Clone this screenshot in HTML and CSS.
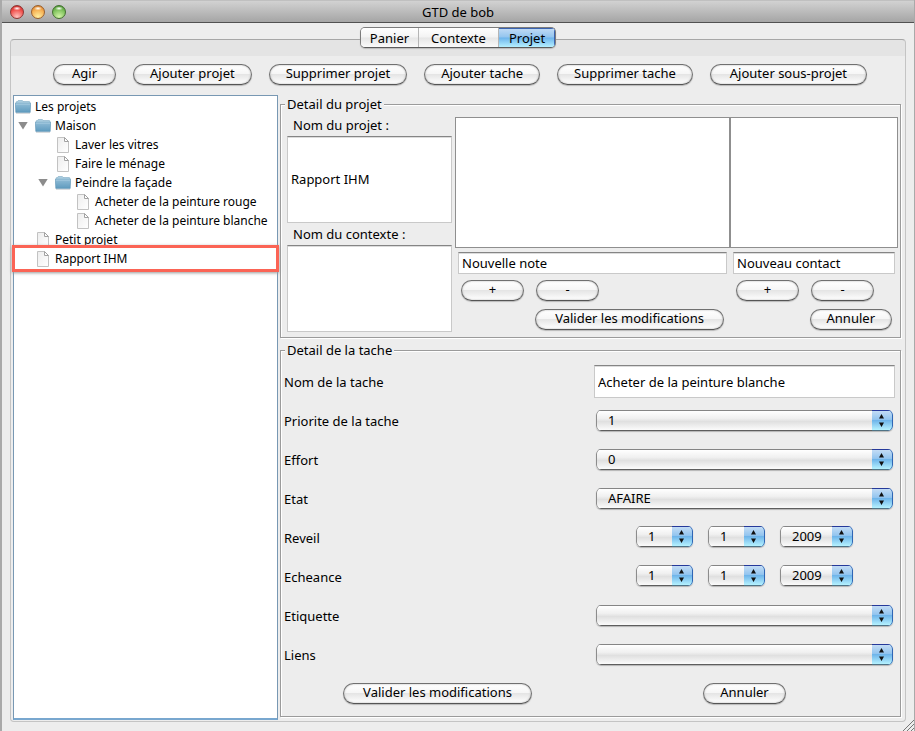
FILE: index.html
```html
<!DOCTYPE html>
<html lang="fr">
<head>
<meta charset="utf-8">
<title>GTD de bob</title>
<link rel="stylesheet" href="styles.css">
</head>
<body>
<svg class="defs" width="0" height="0" aria-hidden="true">
  <defs>
    <linearGradient id="folder-front" x1="0" y1="0" x2="0" y2="1">
      <stop offset="0" stop-color="#90bcd6"/><stop offset="1" stop-color="#5f9bbf"/>
    </linearGradient>
    <linearGradient id="page-fill" x1="0" y1="0" x2="1" y2="1">
      <stop offset="0" stop-color="#ededed"/><stop offset="1" stop-color="#ffffff"/>
    </linearGradient>
    <symbol id="folder" viewBox="0 0 16 16">
      <path d="M1 5V3.4Q1 2.5 2 2.5H2.6L3.2 1.5H7.4L8 2.5H14Q15 2.5 15 3.4V5Z" fill="#a9cde0" stroke="#7fabc4" stroke-width=".6"/>
      <path d="M.3 4.3H15.7L15.2 13.4H.8Z" fill="url(#folder-front)" stroke="#5b92b3" stroke-width=".6"/>
      <path d="M.8 5H15.2" stroke="#b4d6e8" stroke-width=".8"/>
      <path d="M1 14.4H15" stroke="#c6cdd1" stroke-width=".8"/>
    </symbol>
    <symbol id="page" viewBox="0 0 16 16">
      <path d="M2.5 .5H9.5L13.5 4.5V15.5H2.5Z" fill="url(#page-fill)" stroke="#c2c2c2"/>
      <path d="M9.5 .5V4.5H13.5Z" fill="#fff" stroke="#a2a2a2"/>
    </symbol>
    <symbol id="updown" viewBox="0 0 9 13">
      <path d="M4.5 0L7 4.5H2ZM4.5 13L7 8.5H2Z" fill="#111"/>
    </symbol>
  </defs>
</svg>
<div class="window">
  <header class="titlebar">
    <div class="lights">
      <button class="light red" aria-label="Fermer"></button>
      <button class="light amber" aria-label="Réduire"></button>
      <button class="light green" aria-label="Agrandir"></button>
    </div>
    <h1>GTD de bob</h1>
  </header>

  <main class="content">
    <nav class="tabs">
      <button class="tab">Panier</button>
      <button class="tab middle">Contexte</button>
      <button class="tab active">Projet</button>
    </nav>
    <section class="pane">
      <div class="toolbar">
        <button class="pill">Agir</button>
        <button class="pill">Ajouter projet</button>
        <button class="pill">Supprimer projet</button>
        <button class="pill">Ajouter tache</button>
        <button class="pill">Supprimer tache</button>
        <button class="pill wide">Ajouter sous-projet</button>
      </div>

      <div class="split">
        <ul class="tree">
          <li class="node root"><svg class="icon"><use href="#folder"/></svg>Les projets</li>
          <li class="node level1"><span class="twist"></span><svg class="icon"><use href="#folder"/></svg>Maison</li>
          <li class="node level2"><span class="twist leaf"></span><svg class="icon"><use href="#page"/></svg>Laver les vitres</li>
          <li class="node level2"><span class="twist leaf"></span><svg class="icon"><use href="#page"/></svg>Faire le ménage</li>
          <li class="node level2"><span class="twist"></span><svg class="icon"><use href="#folder"/></svg>Peindre la façade</li>
          <li class="node level3"><span class="twist leaf"></span><svg class="icon"><use href="#page"/></svg>Acheter de la peinture rouge</li>
          <li class="node level3"><span class="twist leaf"></span><svg class="icon"><use href="#page"/></svg>Acheter de la peinture blanche</li>
          <li class="node level1"><span class="twist leaf"></span><svg class="icon"><use href="#page"/></svg>Petit projet</li>
          <li class="node level1 marked"><span class="twist leaf"></span><svg class="icon"><use href="#page"/></svg>Rapport IHM</li>
        </ul>

        <div class="details">
          <fieldset class="group project">
            <legend>Detail du projet</legend>
            <div class="project-grid">
              <div class="names">
                <label for="nom-projet">Nom du projet :</label>
                <input id="nom-projet" class="field tall" type="text" value="Rapport IHM">
                <label for="nom-contexte">Nom du contexte :</label>
                <input id="nom-contexte" class="field tall" type="text">
              </div>
              <div class="lists">
                <div class="list" role="listbox" aria-label="Notes"></div>
                <div class="list" role="listbox" aria-label="Contacts"></div>
                <div class="entry">
                  <input class="field" type="text" value="Nouvelle note" aria-label="Nouvelle note">
                  <div class="pair"><button class="pill">+</button><button class="pill">-</button></div>
                  <div class="pair second"><button class="pill wide">Valider les modifications</button></div>
                </div>
                <div class="entry">
                  <input class="field" type="text" value="Nouveau contact" aria-label="Nouveau contact">
                  <div class="pair"><button class="pill">+</button><button class="pill">-</button></div>
                  <div class="pair second"><button class="pill">Annuler</button></div>
                </div>
              </div>
            </div>
          </fieldset>

          <fieldset class="group task">
            <legend>Detail de la tache</legend>
            <div class="task-grid">
              <label for="nom-tache">Nom de la tache</label>
              <div class="cell"><input id="nom-tache" class="field" type="text" value="Acheter de la peinture blanche"></div>
              <label for="priorite">Priorite de la tache</label>
              <div class="cell"><span class="combo"><select id="priorite"><option>1</option></select><svg class="arrows"><use href="#updown"/></svg></span></div>
              <label for="effort">Effort</label>
              <div class="cell"><span class="combo"><select id="effort"><option>0</option></select><svg class="arrows"><use href="#updown"/></svg></span></div>
              <label for="etat">Etat</label>
              <div class="cell"><span class="combo"><select id="etat"><option>AFAIRE</option></select><svg class="arrows"><use href="#updown"/></svg></span></div>
              <label for="reveil">Reveil</label>
              <div class="cell dates">
                <span class="combo"><select id="reveil"><option>1</option></select><svg class="arrows"><use href="#updown"/></svg></span>
                <span class="combo"><select aria-label="Mois du reveil"><option>1</option></select><svg class="arrows"><use href="#updown"/></svg></span>
                <span class="combo year"><select aria-label="Annee du reveil"><option>2009</option></select><svg class="arrows"><use href="#updown"/></svg></span>
              </div>
              <label for="echeance">Echeance</label>
              <div class="cell dates">
                <span class="combo"><select id="echeance"><option>1</option></select><svg class="arrows"><use href="#updown"/></svg></span>
                <span class="combo"><select aria-label="Mois de l'echeance"><option>1</option></select><svg class="arrows"><use href="#updown"/></svg></span>
                <span class="combo year"><select aria-label="Annee de l'echeance"><option>2009</option></select><svg class="arrows"><use href="#updown"/></svg></span>
              </div>
              <label for="etiquette">Etiquette</label>
              <div class="cell"><span class="combo"><select id="etiquette"><option></option></select><svg class="arrows"><use href="#updown"/></svg></span></div>
              <label for="liens">Liens</label>
              <div class="cell"><span class="combo"><select id="liens"><option></option></select><svg class="arrows"><use href="#updown"/></svg></span></div>
              <div class="action"><button class="pill wide">Valider les modifications</button></div>
              <div class="action"><button class="pill">Annuler</button></div>
            </div>
          </fieldset>
        </div>
      </div>
    </section>
  </main>
  <svg class="grip" viewBox="0 0 11 11" aria-hidden="true"><path d="M0 11L11 0M4 11L11 4M8 11L11 8" stroke="#777" fill="none"/></svg>
</div>
</body>
</html>
```
FILE: styles.css
```css
* { box-sizing: border-box; }

body {
  margin: 0;
  min-height: 100vh;
  padding: 0 1px 0 2px;
  display: flex;
  background: #a9a9a9;
  color: #000;
  font-family: "Noto Sans", "Open Sans", sans-serif;
  font-size: 13px;
  line-height: 18px;
}

button, input, select { font: inherit; color: inherit; margin: 0; }

.defs { position: absolute; }

.window {
  position: relative;
  flex: 1;
  display: flex;
  flex-direction: column;
  background: #ededed;
}

/* Title bar */
.titlebar {
  display: grid;
  grid-template-columns: 1fr auto 1fr;
  align-items: center;
  height: 23px;
  padding: 1px 8px 0;
  background: linear-gradient(#d2d2d2, #a5a5a5);
  border-top: 1px solid #c0c0c0;
  border-bottom: 1px solid #515151;
}
.titlebar h1 { margin: 0; font-size: 13px; font-weight: 400; }
.lights { display: flex; gap: 7px; }
.light {
  width: 14px;
  height: 14px;
  padding: 0;
  border: 1px solid;
  border-radius: 50%;
}
.red { border-color: #8d3532; background: radial-gradient(ellipse 4px 2px at 50% 20%, #fff, transparent), radial-gradient(circle at 50% 90%, #ffc4c0, #f0504c 60%, #c0201f); }
.amber { border-color: #99602e; background: radial-gradient(ellipse 4px 2px at 50% 20%, #fff, transparent), radial-gradient(circle at 50% 90%, #fff0a0, #f5ae51 60%, #cc6f20); }
.green { border-color: #42702f; background: radial-gradient(ellipse 4px 2px at 50% 20%, #fff, transparent), radial-gradient(circle at 50% 90%, #d4f5a8, #7cc05a 60%, #3f8528); }

/* Tabs */
.content {
  flex: 1;
  display: flex;
  flex-direction: column;
  padding: 4px 8px 9px;
}
.tabs {
  z-index: 1;
  align-self: center;
  display: flex;
  margin-bottom: -9px;
  border: 1px solid #7c7c7c;
  border-bottom-color: #5c5c5c;
  border-radius: 5px;
  box-shadow: 0 1px 1px #bbb;
  overflow: hidden;
}
.tab {
  height: 19px;
  padding: 0 9px;
  border: 0;
  border-right: 1px solid #b5b5b5;
  background: linear-gradient(#fff, #f3f3f3 48%, #e6e6e6 52%, #fafafa);
  line-height: 18px;
}
.tab.middle { padding: 0 12px; }
.tab.active {
  padding: 0 10px;
  border: 0;
  background: linear-gradient(#c4dcf5, #93c5ef 48%, #6db4ec 52%, #b5f0ff);
  box-shadow: inset -1px 1px 0 #3a63b0;
}

.pane {
  flex: 1;
  display: flex;
  flex-direction: column;
  padding: 24px 4px 1px 2px;
  border: 1px solid #c4c4c4;
  border-top-color: #a6a6a6;
  border-radius: 4px;
  background: linear-gradient(#e4e4e4 16px, #ededed 16px);
}
.toolbar {
  display: flex;
  gap: 17px;
  padding: 0 0 10px 40px;
}

.pill {
  height: 21px;
  min-width: 63px;
  padding: 0 16px 2px;
  border: 1px solid #707070;
  border-bottom-color: #555;
  border-radius: 11px;
  background: linear-gradient(#fff, #f6f6f6 45%, #e5e5e5 50%, #fff);
  box-shadow: 0 1px 1px #b8b8b8, inset 0 0 2px #aaa;
  line-height: 17px;
  white-space: nowrap;
}
.pill.wide { padding: 0 19px 2px; }

.split { flex: 1; display: flex; gap: 2px; }

/* Project tree */
.tree {
  width: 265px;
  margin: 0;
  padding: 1px 0 0;
  list-style: none;
  background: #fff;
  border: 1px solid #7898b3;
  border-bottom: 2px solid #78a7cf;
  font-size: 12px;
}
.node {
  display: flex;
  align-items: center;
  height: 19px;
  padding-left: 1px;
  white-space: nowrap;
}
.icon { width: 16px; height: 16px; margin-right: 4px; flex: none; }
.level2 { padding-left: 21px; }
.level3 { padding-left: 41px; }
.twist {
  width: 20px;
  height: 8px;
  flex: none;
  background: #8c8c8c;
  clip-path: polygon(3px 0, 13px 0, 8px 8px);
}
.twist.leaf { background: none; }
.marked {
  position: relative;
}
.marked::after {
  content: "";
  position: absolute;
  inset: -4px -2px;
  border: 3px solid #fb6455;
  box-shadow: 0 1px 3px #999;
}

/* Detail groups */
.details {
  flex: 1;
  min-width: 0;
  display: flex;
  flex-direction: column;
  gap: 3px;
  padding-bottom: 3px;
}
.group {
  min-width: 0;
  margin: 0;
  border: 1px solid #9b9b9b;
  box-shadow: inset 1px 1px 0 #fff, 1px 1px 0 #fff;
}
.group legend {
  margin-left: 1px;
  padding: 0 2px;
  background: #ededed;
}
.project { padding: 3px 2px 5px 3px; }
.task { flex: 1; padding: 3px 2px 0 3px; }

.project-grid { display: flex; gap: 3px; }
.names {
  width: 165px;
  margin-left: 3px;
  display: flex;
  flex-direction: column;
}
.names label { height: 22px; padding-left: 6px; line-height: 22px; }
.names label:first-child { height: 20px; line-height: 18px; }

.field {
  width: 100%;
  height: 22px;
  padding: 0 3px;
  border: 1px solid #c9c9c9;
  border-top-color: #858585;
  border-radius: 0;
  background: #fff;
  box-shadow: inset 0 1px 0 #dcdcdc;
}
.field.tall { height: 87px; padding-bottom: 2px; }

.lists {
  flex: 1;
  margin-top: 1px;
  display: grid;
  grid-template-columns: 275fr 168fr;
  grid-template-rows: 131px auto;
}
.list {
  background: #fff;
  border: 1px solid #8f8f8f;
}
.entry { padding: 4px 3px 0; }
.pair { display: flex; gap: 12px; padding: 6px 3px 0; }
.second { justify-content: flex-end; padding-top: 8px; }

.task-grid {
  display: grid;
  grid-template-columns: 1fr 1fr;
  grid-auto-rows: 39px;
  align-items: center;
}
.cell { padding: 0 3px; }
.cell .field { display: block; height: 33px; }

.combo { display: grid; margin: 0 2px; }
.combo > * { grid-area: 1 / 1; }
.combo select {
  appearance: none;
  width: 100%;
  height: 21px;
  padding: 0 12px 2px;
  border: 0;
  border-radius: 5px;
  background:
    linear-gradient(#26399a 1px, #c3dcf5 1px, #93c5ef 45%, #6fb5ea 50%, #b5f2ff 20px, #4f7385 20px) right / 21px 100% no-repeat,
    linear-gradient(#858585 1px, #fff 1px, #f0f0f0 40%, #e0e0e0 55%, #fbfbfb 20px, #5e5e5e 20px);
  box-shadow: 0 1px 1px #b4b4b4, inset 1px 0 0 #8c8c8c, inset -1px 0 0 #2f66b5;
}
.arrows {
  width: 9px;
  height: 13px;
  margin: 4px 7px 0 0;
  justify-self: end;
  pointer-events: none;
}
.dates { display: flex; justify-content: center; gap: 15px; padding-bottom: 2px; }
.dates .combo { width: 57px; margin: 0; }
.dates .year { width: 73px; }
.action { text-align: center; }

.grip {
  position: absolute;
  right: 0;
  bottom: 0;
  width: 11px;
  height: 11px;
}
```
